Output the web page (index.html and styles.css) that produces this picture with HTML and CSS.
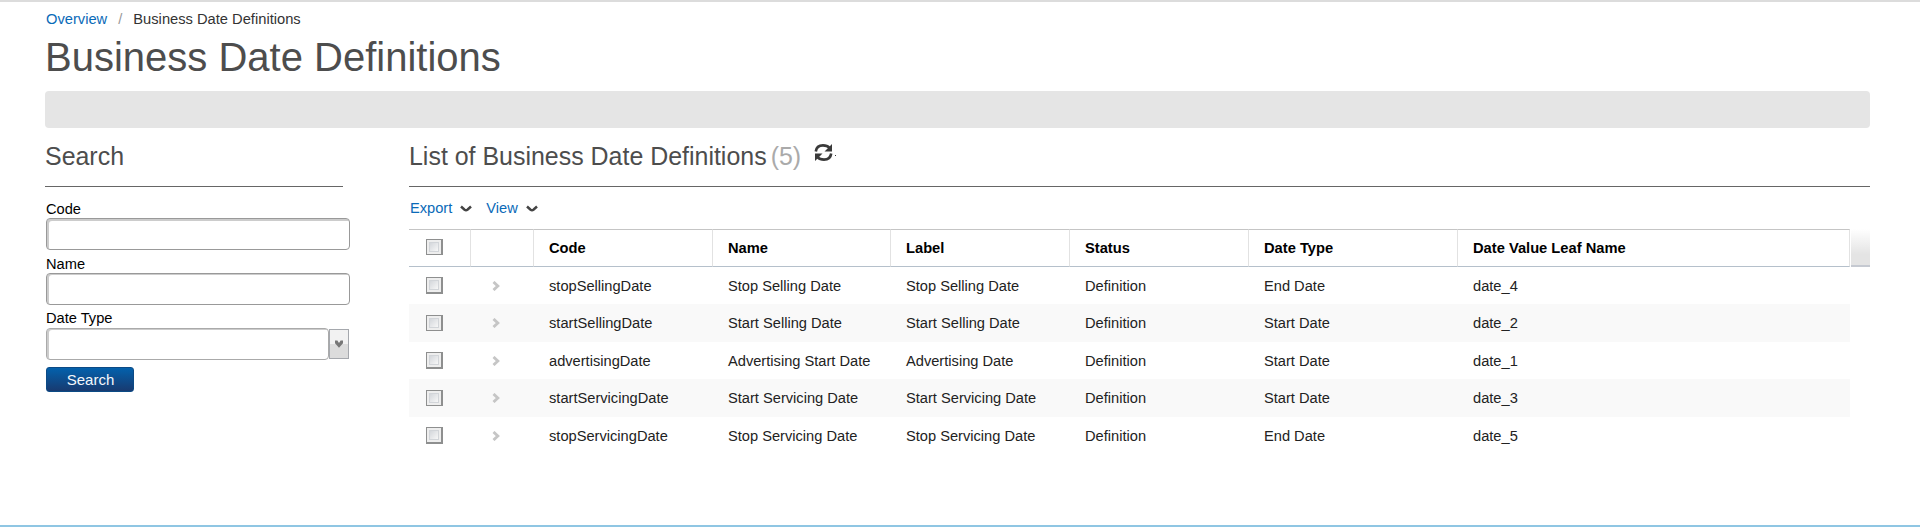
FILE: index.html
```html
<!DOCTYPE html>
<html lang="en">
<head>
<meta charset="utf-8">
<title>Business Date Definitions</title>
<link rel="stylesheet" href="styles.css">
</head>
<body>
<div class="page">
  <nav class="crumbs"><a href="#">Overview</a><span class="sep">/</span><span class="current">Business Date Definitions</span></nav>
  <h1 class="title">Business Date Definitions</h1>
  <div class="bar"></div>
  <div class="columns">
    <form class="search">
      <h2 class="heading">Search</h2>
      <label class="label" for="code">Code</label>
      <input class="input" id="code" type="text">
      <label class="label" for="name">Name</label>
      <input class="input" id="name" type="text">
      <label class="label type-label" for="type">Date Type</label>
      <div class="combo">
        <input class="input combo-input" id="type" type="text">
        <span class="combo-button"><svg width="10" height="8" viewBox="0 0 10 8"><path d="M1 .5h2.400L5 3l1.600-2.500H9v2.800L5 7.800 1 3.300z" fill="#777"/></svg></span>
      </div>
      <button class="submit" type="button">Search</button>
    </form>
    <main class="list">
      <h2 class="heading"><span class="list-title">List of Business Date Definitions</span><span class="count">(5)</span>
        <svg class="refresh" width="22" height="20" viewBox="0 0 22 20"><path d="M1.800 8.500C2.300 4.500 5 2.400 9 2.400c3 0 4.800.6 6.300 2.200M17.200 10.500C16.700 14.500 14 16.600 10 16.600c-3 0-4.800-.6-6.300-2.200" fill="none" stroke="#3a3a3a" stroke-width="2.600"/><path d="M18 1v7.500h-7.500zM1 18v-7.500h7.500z" fill="#3a3a3a"/><path d="M21 12h1v1h-1z" fill="#3a3a3a"/></svg>
      </h2>
      <div class="toolbar">
        <a href="#">Export</a><svg class="caret" width="12" height="8" viewBox="0 0 12 8"><path d="M1 1.500L4.600 4.700Q6 5.700 7.400 4.700L11 1.500" fill="none" stroke="#444" stroke-width="2.500"/></svg>
        <a class="view" href="#">View</a><svg class="caret" width="12" height="8" viewBox="0 0 12 8"><path d="M1 1.500L4.600 4.700Q6 5.700 7.400 4.700L11 1.500" fill="none" stroke="#444" stroke-width="2.500"/></svg>
      </div>
      <div class="grid">
        <div class="row head"><span class="cell check"><i class="box"></i></span><span class="cell"></span><span class="cell">Code</span><span class="cell">Name</span><span class="cell">Label</span><span class="cell">Status</span><span class="cell">Date Type</span><span class="cell">Date Value Leaf Name</span><span class="filler"></span></div>
        <div class="row"><span class="cell check"><i class="box"></i></span><span class="cell expand"><svg width="8" height="10" viewBox="0 0 8 10"><path d="M1.500 1L5.800 5 1.500 9" fill="none" stroke="#c6c6c6" stroke-width="2.900"/></svg></span><span class="cell">stopSellingDate</span><span class="cell">Stop Selling Date</span><span class="cell">Stop Selling Date</span><span class="cell">Definition</span><span class="cell">End Date</span><span class="cell">date_4</span></div>
        <div class="row alt"><span class="cell check"><i class="box"></i></span><span class="cell expand"><svg width="8" height="10" viewBox="0 0 8 10"><path d="M1.500 1L5.800 5 1.500 9" fill="none" stroke="#c6c6c6" stroke-width="2.900"/></svg></span><span class="cell">startSellingDate</span><span class="cell">Start Selling Date</span><span class="cell">Start Selling Date</span><span class="cell">Definition</span><span class="cell">Start Date</span><span class="cell">date_2</span></div>
        <div class="row"><span class="cell check"><i class="box"></i></span><span class="cell expand"><svg width="8" height="10" viewBox="0 0 8 10"><path d="M1.500 1L5.800 5 1.500 9" fill="none" stroke="#c6c6c6" stroke-width="2.900"/></svg></span><span class="cell">advertisingDate</span><span class="cell">Advertising Start Date</span><span class="cell">Advertising Date</span><span class="cell">Definition</span><span class="cell">Start Date</span><span class="cell">date_1</span></div>
        <div class="row alt"><span class="cell check"><i class="box"></i></span><span class="cell expand"><svg width="8" height="10" viewBox="0 0 8 10"><path d="M1.500 1L5.800 5 1.500 9" fill="none" stroke="#c6c6c6" stroke-width="2.900"/></svg></span><span class="cell">startServicingDate</span><span class="cell">Start Servicing Date</span><span class="cell">Start Servicing Date</span><span class="cell">Definition</span><span class="cell">Start Date</span><span class="cell">date_3</span></div>
        <div class="row"><span class="cell check"><i class="box"></i></span><span class="cell expand"><svg width="8" height="10" viewBox="0 0 8 10"><path d="M1.500 1L5.800 5 1.500 9" fill="none" stroke="#c6c6c6" stroke-width="2.900"/></svg></span><span class="cell">stopServicingDate</span><span class="cell">Stop Servicing Date</span><span class="cell">Stop Servicing Date</span><span class="cell">Definition</span><span class="cell">End Date</span><span class="cell">date_5</span></div>
      </div>
    </main>
  </div>
</div>
</body>
</html>
```
FILE: styles.css
```css
* { box-sizing: border-box; }
html, body { margin: 0; height: 527px; overflow: hidden; }
body { background: #fff; color: #222; font: 14.65px/18px "Liberation Sans", Arial, sans-serif; }
a { color: #0a6ab8; text-decoration: none; }
.page { height: 527px; border-top: 2px solid #dcdcdc; border-bottom: 2px solid #8fc6e3; padding: 8px 50px 0 45px; }
.crumbs { height: 18px; display: flex; margin-left: 1px; font-size: 14.7px; color: #333; }
.sep { margin: 0 11px; color: #999; }
.title { margin: 5px 0 0; height: 48px; font-size: 40px; line-height: 48px; font-weight: 400; color: #4d4d4d; }
.bar { margin: 10px 0 0; height: 37px; border-radius: 4px; background: #e5e5e5; }
.columns { display: flex; gap: 66px; }
.search { width: 298px; display: flex; flex-direction: column; align-items: flex-start; flex: none; }
.heading { margin: 0; width: 100%; height: 59px; border-bottom: 1px solid #666; padding-top: 14px; font-size: 24.950px; line-height: 28px; font-weight: 400; color: #4d4d4d; display: flex; align-items: flex-start; }
.label { margin: 13px 0 0 1px; height: 18px; color: #000; }
.input { display: block; flex: none; margin: 0 0 0 1px; width: 304px; height: 32px; border: 1px solid #999; border-radius: 4px; box-shadow: inset 2px 2px 0 #ccc; background: #fff; }
.input + .label { margin-top: 5px; }
.input + .type-label { margin-top: 4px; height: 19px; }
#name { box-shadow: inset 2px 1px 0 #ccc; }
.combo { display: flex; align-items: center; }
.combo-input { width: 283px; border-color: #aaa; box-shadow: inset 2px 1px 0 #ccc; }
.combo-button { width: 20px; height: 30px; border: 1px solid #a5a8ad; background: linear-gradient(#f2f2f2 50%, #dcdcdc 50%); display: flex; align-items: center; justify-content: center; }
.submit { margin: 7px 0 0 1px; width: 88px; height: 25px; padding: 0 0 0 1px; border: 1px solid #0c4a85; border-radius: 3px; background: linear-gradient(#0361ac, #183a70); color: #f4f8fc; font: 15px/20px "Liberation Sans", Arial, sans-serif; }
.list { flex: 1; }
.count { color: #aaa; margin-left: 4px; }
.refresh { margin: 1px 0 0 13px; }
.toolbar { height: 42px; padding: 12px 0 0 1px; display: flex; }
.caret { margin: 6px 0 0 8px; }
.view { margin-left: 14px; }
.row { display: grid; grid-template-columns: 62px 63px 179px 178px 179px 179px 209px 392px 20px; height: 37px; width: 1441px; }
.row.alt { height: 38px; background: #f9f9f9; }
.cell { padding: 10px 0 0 15px; white-space: nowrap; }
.head { height: 38px; width: 1461px; color: #000; font-weight: 700; font-size: 14.7px; }
.head .cell { border-top: 1px solid #c5c5c5; border-bottom: 1px solid #b5c0cb; border-right: 1px solid #e2e2e2; padding-top: 9px; }
.filler { margin-left: 1px; border-bottom: 2px solid #c5c9d1; background: linear-gradient(#fff, #e4e4e4 70%); }
.cell.check { padding: 10px 0 0 17px; }
.alt .cell.check { padding-top: 11px; }
.head .cell.check { padding-top: 9px; }
.box { display: block; width: 17px; height: 16px; border: solid #8e8f8f; border-width: 1px 2px 1px 1px; box-shadow: inset 0 0 0 2px #eee, inset 0 0 0 3px #d2d5d9; background: linear-gradient(135deg, #c7cbd1, #f8f8f8 80%); }
.row:not(.head):not(.alt) .box { height: 17px; border-bottom-width: 2px; }
.cell.expand { padding: 14px 0 0 21px; }
.expand svg { display: block; }
```
